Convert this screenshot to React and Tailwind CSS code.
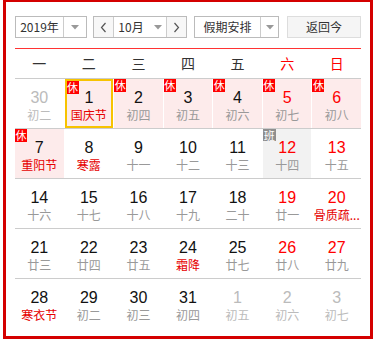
import React from 'react';

const WEEK = ['一', '二', '三', '四', '五', '六', '日'];

// d: day, l: lunar text, o: other month, h: holiday (休), w: work day (班), f: festival text, t: today
const ROWS = [
  [
    { d: 30, l: '初二', o: true },
    { d: 1, l: '国庆节', h: true, f: true, t: true },
    { d: 2, l: '初四', h: true },
    { d: 3, l: '初五', h: true },
    { d: 4, l: '初六', h: true },
    { d: 5, l: '初七', h: true },
    { d: 6, l: '初八', h: true },
  ],
  [
    { d: 7, l: '重阳节', h: true, f: true },
    { d: 8, l: '寒露', f: true },
    { d: 9, l: '十一' },
    { d: 10, l: '十二' },
    { d: 11, l: '十三' },
    { d: 12, l: '十四', w: true },
    { d: 13, l: '十五' },
  ],
  [
    { d: 14, l: '十六' },
    { d: 15, l: '十七' },
    { d: 16, l: '十八' },
    { d: 17, l: '十九' },
    { d: 18, l: '二十' },
    { d: 19, l: '廿一' },
    { d: 20, l: '骨质疏...', f: true },
  ],
  [
    { d: 21, l: '廿三' },
    { d: 22, l: '廿四' },
    { d: 23, l: '廿五' },
    { d: 24, l: '霜降', f: true },
    { d: 25, l: '廿七' },
    { d: 26, l: '廿八' },
    { d: 27, l: '廿九' },
  ],
  [
    { d: 28, l: '寒衣节', f: true },
    { d: 29, l: '初二' },
    { d: 30, l: '初三' },
    { d: 31, l: '初四' },
    { d: 1, l: '初五', o: true },
    { d: 2, l: '初六', o: true },
    { d: 3, l: '初七', o: true },
  ],
];

function Caret() {
  return (
    <svg width="8" height="5" viewBox="0 0 8 5">
      <path d="M0 0 L8 0 L4 4.5 Z" fill="#999" />
    </svg>
  );
}

function Chevron({ dir }) {
  return (
    <svg width="7" height="11" viewBox="0 0 7 11">
      <path
        d={dir === 'left' ? 'M5.5 1 L1.5 5.5 L5.5 10' : 'M1.5 1 L5.5 5.5 L1.5 10'}
        fill="none"
        stroke="#555"
        strokeWidth="1.2"
      />
    </svg>
  );
}

function Cell({ c, col }) {
  const weekend = col >= 5;
  let numColor = 'text-[#111]';
  if (c.o) numColor = 'text-[#bbb]';
  else if (weekend) numColor = 'text-[#f00]';
  let lunarColor = 'text-[#999]';
  if (c.o) lunarColor = 'text-[#bbb]';
  else if (c.f) lunarColor = 'text-[#e60000]';

  let bg = 'bg-white';
  if (c.h) bg = 'bg-[#fdebeb]';
  if (c.w) bg = 'bg-[#f2f2f2]';

  return (
    <div className={`relative h-[49px] ${bg} ${c.t ? 'border-2 border-[#f7c300]' : ''}`}>
      {c.h && (
        <span className="absolute left-0 top-0 w-[12px] h-[13px] bg-[#f00] text-white text-[11px] leading-[13px] text-center">
          休
        </span>
      )}
      {c.w && (
        <span className="absolute left-0 top-0 w-[13px] h-[12px] bg-[#8f8f8f] text-white text-[11px] leading-[12px] text-center">
          班
        </span>
      )}
      <div className={`flex flex-col items-center ${c.t ? 'pt-[7px]' : 'pt-[9px]'}`}>
        <div className={`text-[16px] leading-[19px] ${numColor}`} style={{ fontFamily: '"Liberation Sans", Arial, sans-serif' }}>
          {c.d}
        </div>
        <div className={`text-center text-[12px] leading-[16px] whitespace-nowrap ${lunarColor}`}>{c.l}</div>
      </div>
    </div>
  );
}

export default function App() {
  return (
    <div className="w-[374px] h-[340px] bg-white pl-[3px]" style={{ fontFamily: '"Noto Sans CJK SC", "Liberation Sans", sans-serif' }}>
      <div className="w-[370px] h-[339px] border-x-[3px] border-t-2 border-b-[3px] border-[#d40000] px-[9px] pt-[14px]">
        <div className="flex items-center h-[22px] text-[12px] text-[#333]">
          <div className="flex h-[22px] w-[72px] border border-[#bbb]">
            <div className="flex-1 flex items-center justify-center">2019年</div>
            <div className="w-[23px] border-l border-[#ccc] flex items-center justify-center">
              <Caret />
            </div>
          </div>
          <div className="ml-[6px] flex h-[22px] w-[94px] border border-[#bbb]">
            <div className="w-[20px] bg-[#f7f7f7] flex items-center justify-center border-r border-[#ccc]">
              <Chevron dir="left" />
            </div>
            <div className="flex-1 flex items-center justify-center gap-[10px]">
              <span>10月</span>
              <Caret />
            </div>
            <div className="w-[20px] bg-[#f7f7f7] flex items-center justify-center border-l border-[#ccc]">
              <Chevron dir="right" />
            </div>
          </div>
          <div className="ml-[7px] flex h-[22px] w-[85px] border border-[#bbb]">
            <div className="flex-1 flex items-center justify-center">假期安排</div>
            <div className="w-[18px] border-l border-[#ccc] flex items-center justify-center">
              <Caret />
            </div>
          </div>
          <button className="ml-[8px] h-[22px] w-[74px] border border-[#ddd] bg-[#f5f5f5] flex items-center justify-center text-[#333]">
            返回今
          </button>
        </div>

        <div className="mt-[10px] border-t border-[#f33]">
          <div className="grid grid-cols-7 gap-x-px h-[30px] border-b border-[#ccc] items-center text-[14px]">
            {WEEK.map((w, i) => (
              <div key={w} className={`text-center ${i >= 5 ? 'text-[#f00]' : 'text-[#333]'}`}>
                {w}
              </div>
            ))}
          </div>
          {ROWS.map((row, r) => (
            <div
              key={r}
              className={`grid grid-cols-7 gap-x-px ${r < ROWS.length - 1 ? 'border-b border-[#ccc]' : ''}`}
            >
              {row.map((c, i) => (
                <Cell key={i} c={c} col={i} />
              ))}
            </div>
          ))}
        </div>
      </div>
    </div>
  );
}
